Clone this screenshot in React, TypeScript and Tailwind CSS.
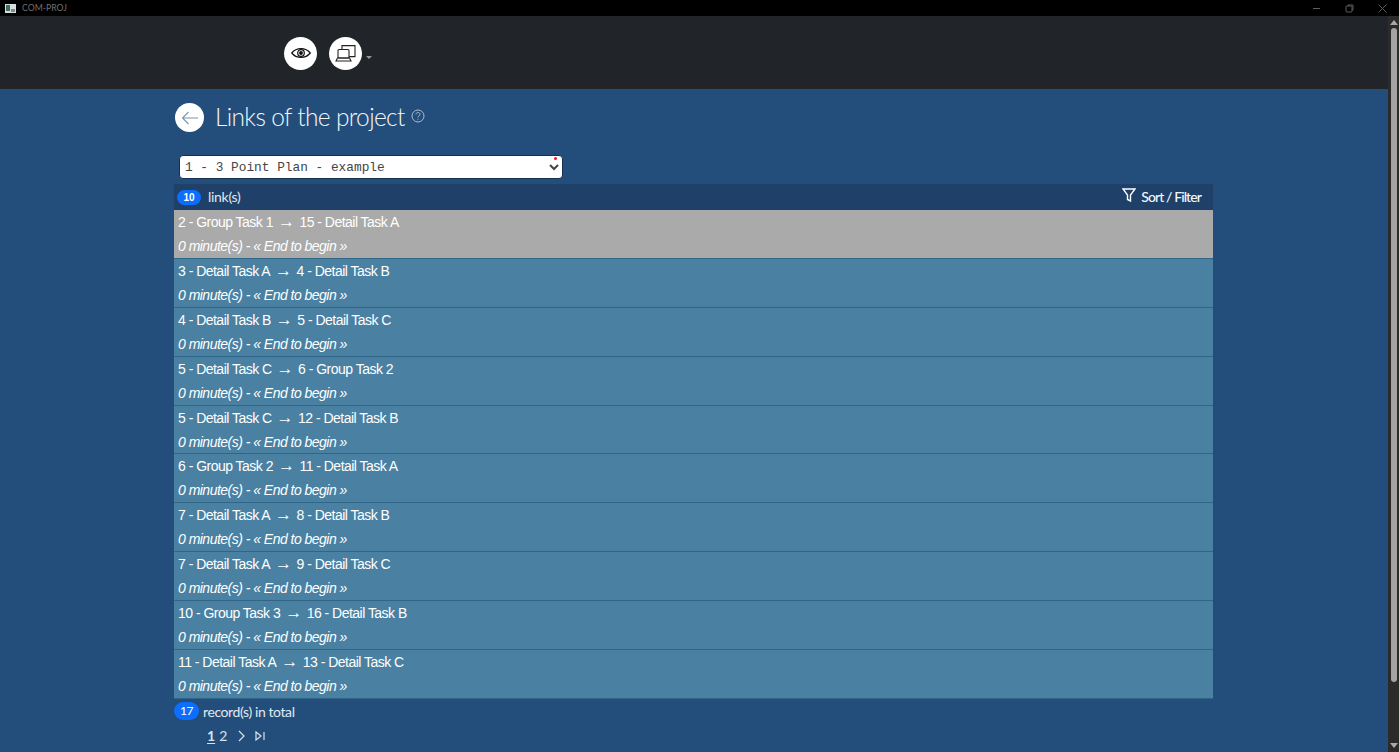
import React from "react";

const rows = [
  ["2 - Group Task 1", "15 - Detail Task A"],
  ["3 - Detail Task A", "4 - Detail Task B"],
  ["4 - Detail Task B", "5 - Detail Task C"],
  ["5 - Detail Task C", "6 - Group Task 2"],
  ["5 - Detail Task C", "12 - Detail Task B"],
  ["6 - Group Task 2", "11 - Detail Task A"],
  ["7 - Detail Task A", "8 - Detail Task B"],
  ["7 - Detail Task A", "9 - Detail Task C"],
  ["10 - Group Task 3", "16 - Detail Task B"],
  ["11 - Detail Task A", "13 - Detail Task C"],
];

const seg = { fontFamily: 'Lato, "Open Sans", sans-serif' };

export default function App() {
  return (
    <div className="h-[752px] w-[1399px] overflow-hidden flex flex-col bg-[#234e7c] text-white" style={{ fontFamily: '"Liberation Sans", Arial, sans-serif' }}>
      {/* Title bar */}
      <div className="h-4 shrink-0 bg-black flex items-center pl-[5px]">
        <svg width="11" height="9" viewBox="0 0 11 9" className="mr-[6px]">
          <rect width="11" height="9" fill="#d8dedc" />
          <rect x="1" y="1" width="4" height="6" fill="#3c6e66" />
          <rect x="6" y="5" width="4" height="3" fill="#7a8a90" />
        </svg>
        <span className="text-[8.700px] text-[#6f6f6f]" style={seg}>COM-PROJ</span>
        <div className="ml-auto flex items-center mr-[11px] gap-[22px] text-[#5d5d5d]">
          <svg width="11" height="11" viewBox="0 0 11 11" stroke="currentColor" fill="none"><path d="M2 5.5h7" /></svg>
          <svg width="11" height="11" viewBox="0 0 11 11" stroke="currentColor" fill="none"><rect x="2" y="3" width="6" height="6" rx="1" /><path d="M4 3V2h5v5H8" /></svg>
          <svg width="11" height="11" viewBox="0 0 11 11" stroke="currentColor" fill="none"><path d="M1.5 1.5l8 8M9.5 1.5l-8 8" /></svg>
        </div>
      </div>
      <div className="flex flex-1 min-h-0">
        <div className="flex-1 min-w-0 flex flex-col">
          {/* Toolbar */}
          <div className="h-[73px] shrink-0 bg-[#212529] flex items-center pl-[284px] pt-[1px]">
            <button className="w-[33px] h-[33px] rounded-full bg-white flex items-center justify-center">
              <svg width="20" height="10" viewBox="0 0 20 10" fill="none" stroke="#111" strokeWidth="1.200">
                <path d="M.7 5C3.200 2 6.200.6 10 .6S16.800 2 19.300 5c-2.500 3-5.500 4.400-9.300 4.400S3.200 8 .7 5z" />
                <circle cx="10" cy="5" r="3.300" />
                <circle cx="10" cy="5" r="1.300" fill="#111" />
              </svg>
            </button>
            <button className="ml-[12px] w-[33px] h-[33px] rounded-full bg-white flex items-center justify-center">
              <svg width="21" height="17" viewBox="0 0 21 17" fill="none" stroke="#222" strokeWidth="1.100">
                <path d="M7 4V.6h13v11h-6" />
                <rect x="3" y="4.500" width="11" height="8.500" rx="1" fill="white" />
                <path d="M1 16h15l-1.500-3h-12z" />
              </svg>
            </button>
            <span className="ml-[4px] mt-[8px] w-0 h-0 border-x-[3.500px] border-x-transparent border-t-[3.500px] border-t-[#999]" />
          </div>
          {/* Content */}
          <div className="ml-[174px] w-[1039px] flex flex-col">
            <div className="h-[66px] flex items-start pt-[14px] pl-[1px]">
              <button className="w-[29px] h-[29px] rounded-full bg-white flex items-center justify-center">
                <svg width="18" height="14" viewBox="0 0 18 14" fill="none" stroke="#7d95ad" strokeWidth="1.100">
                  <path d="M17 7H1.500M7.500 1L1.500 7l6 6" />
                </svg>
              </button>
              <h1 className="ml-[11px] text-[24.500px] leading-[27px] tracking-[-0.65px] font-light text-[#f3f6f9]" style={seg}>Links of the project</h1>
              <svg width="14" height="14" viewBox="0 0 14 14" fill="none" stroke="#a9bccf" strokeWidth="1" className="ml-[6px] mt-[6px]">
                <circle cx="7" cy="7" r="6" />
                <path d="M5 5.400c0-1.200 1-1.900 2-1.900s2 .7 2 1.800c0 1.500-2 1.500-2 3M7 9.700v1" />
              </svg>
            </div>
            <div className="relative ml-[5px] w-[384px]">
              <select defaultValue="1" className="block w-full h-[24px] bg-white text-[#444] rounded-[4px] border border-[#16304f] text-[12.800px] pl-[1px] appearance-auto" style={{ fontFamily: '"Liberation Mono", "Courier New", monospace' }}>
                <option value="1">1 - 3 Point Plan - example</option>
              </select>
              <span className="absolute left-[375px] top-[2px] w-[3px] h-[3px] rounded-full bg-[#e02020]" />
            </div>
            <div className="mt-[5px] h-[26px] bg-[#1f4068] flex items-center pl-[3px] pr-[12px]">
              <span className="w-[24px] h-[15px] rounded-full bg-[#0d6efd] text-[10px] font-bold flex items-center justify-center">10</span>
              <span className="ml-[7px] mb-[1px] text-[14px] tracking-[-0.3px] text-[#e0e8f0]" style={seg}>link(s)</span>
              <span className="ml-auto mb-[1px] flex items-center text-[14px] font-medium text-[#f4f7fa]" style={seg}>
                <svg width="14" height="14" viewBox="0 0 14 14" fill="none" stroke="white" strokeWidth="1.400" className="mr-[5px] -mt-[4px]">
                  <path d="M1 1h12L8.500 7v6l-3-1.500V7z" />
                </svg>
                <span className="tracking-[-0.9px]">Sort / Filter</span>
              </span>
            </div>
            <div>
              {rows.map(([a, b], i) => (
                <div key={i} className={`h-[48.900px] border-b border-b-[#2f6587] flex flex-col pl-[4px] text-[14px] tracking-[-0.52px] ${i === 0 ? "bg-[#aaaaaa]" : "bg-[#4a81a3]"}`}>
                  <div className="h-[24px] leading-[24px] whitespace-pre">{a}<span className="mx-[5px] text-[17px] leading-none">→</span>{b}</div>
                  <div className="h-[24px] leading-[24px] italic">0 minute(s) - « End to begin »</div>
                </div>
              ))}
            </div>
            <div className="h-[25px] flex items-center">
              <span className="w-[25px] h-[18px] rounded-full bg-[#0d6efd] text-[12px] tracking-[-0.5px] flex items-center justify-center" style={seg}>17</span>
              <span className="ml-[4px] text-[14px] tracking-[-0.4px] text-[#e0e8f0]" style={seg}>record(s) in total</span>
            </div>
            <div className="flex items-center pl-[33px] h-[24px] text-[14px] text-[#d8e2ec]" style={seg}>
              <span className="font-bold underline underline-offset-2">1</span>
              <span className="ml-[4px]">2</span>
              <svg width="10" height="12" viewBox="0 0 10 12" fill="none" stroke="#d8e2ec" strokeWidth="1.200" className="ml-[10px]"><path d="M2 1l5 5-5 5" /></svg>
              <svg width="12" height="10" viewBox="0 0 12 10" fill="none" stroke="#d8e2ec" strokeWidth="1.200" className="ml-[7px]"><path d="M2 1l5 4-5 4zM10 1v8" /></svg>
            </div>
          </div>
        </div>
        {/* Scrollbar */}
        <div className="w-[11px] shrink-0 bg-[#2b2b2b] flex flex-col items-center pt-[4px]">
          <span className="w-0 h-0 border-x-[4px] border-x-transparent border-b-[5px] border-b-[#a8a8a8]" />
          <span className="mt-[3px] w-[6px] h-[654px] rounded-full bg-[#a3a3a3]" />
          <span className="mt-auto mb-[4px] w-0 h-0 border-x-[4px] border-x-transparent border-t-[5px] border-t-[#a8a8a8]" />
        </div>
      </div>
    </div>
  );
}
